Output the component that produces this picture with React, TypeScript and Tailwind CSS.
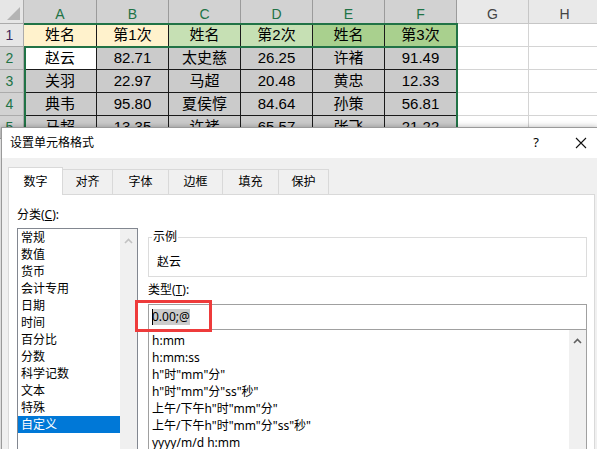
import React from "react";

const rows: string[][] = [
  ["姓名", "第1次", "姓名", "第2次", "姓名", "第3次"],
  ["赵云", "82.71", "太史慈", "26.25", "许褚", "91.49"],
  ["关羽", "22.97", "马超", "20.48", "黄忠", "12.33"],
  ["典韦", "95.80", "夏侯惇", "84.64", "孙策", "56.81"],
  ["马超", "13.35", "许褚", "65.57", "张飞", "21.22"],
];

const cols = ["A", "B", "C", "D", "E", "F", "G", "H"];

const headBg = ["bg-[#fff2cc]", "bg-[#fff2cc]", "bg-[#c6e0b4]", "bg-[#c6e0b4]", "bg-[#a9d08e]", "bg-[#a9d08e]"];

const categories = ["常规", "数值", "货币", "会计专用", "日期", "时间", "百分比", "分数", "科学记数", "文本", "特殊", "自定义"];

const formats = [
  "h:mm",
  "h:mm:ss",
  'h"时"mm"分"',
  'h"时"mm"分"ss"秒"',
  '上午/下午h"时"mm"分"',
  '上午/下午h"时"mm"分"ss"秒"',
  "yyyy/m/d h:mm",
  "mm:ss",
];

const tabs = [
  { label: "数字", w: "w-[55px]" },
  { label: "对齐", w: "w-[50px]" },
  { label: "字体", w: "w-[56px]" },
  { label: "边框", w: "w-[54px]" },
  { label: "填充", w: "w-[56px]" },
  { label: "保护", w: "w-[50px]" },
];

const Chevron = ({ color }: { color: string }) => (
  <svg width="9" height="6" viewBox="0 0 9 6" className="mx-auto">
    <polyline points="1,5 4.5,1.5 8,5" fill="none" stroke={color} strokeWidth="1.6" />
  </svg>
);

const Sheet = () => {
  return (
    <div className="grid grid-cols-[24px_73px_72px_72px_72px_72px_72px_72px_72px] grid-rows-[24px_23px_23px_23px_23px_23px] font-['Liberation_Sans','Noto_Sans_CJK_SC',sans-serif] text-[15px] text-black">
      <div className="bg-[#e6e6e6] border-r border-b border-[#ababab] flex items-end justify-end p-[3px]">
        <div className="w-0 h-0 border-l-[13px] border-l-transparent border-b-[13px] border-b-[#b4b4b4]"></div>
      </div>
      {cols.map((c, i) => (
        <div
          key={c}
          className={`flex items-center justify-center pt-[6px] text-[14px] border-r border-b ${
            i < 6 ? "bg-[#d2d2d2] text-[#217346] border-[#9b9b9b]" : "bg-[#e9e9e9] text-[#444] border-[#c6c6c6]"
          }`}
        >
          {c}
        </div>
      ))}
      {rows.map((r, ri) => (
        <React.Fragment key={ri}>
          <div
            className={`flex items-center justify-center pr-[4px] text-[14px] border-r border-b border-[#ababab] ${
              ri === 0 ? "bg-[#e6e6e6] text-[#3d2a5c]" : "bg-[#d2d2d2] text-[#217346]"
            }`}
          >
            {ri + 1}
          </div>
          {r.map((v, ci) => (
            <div
              key={ci}
              className={`flex items-center justify-center border-r border-b border-[#1a1a1a] ${
                ri === 0 ? headBg[ci] : ri === 1 && ci === 0 ? "bg-white" : "bg-[#cbcbcb]"
              }`}
            >
              {v}
            </div>
          ))}
          <div className="bg-white border-r border-b border-[#d4d4d4]"></div>
          <div className="bg-white border-r border-b border-[#d4d4d4]"></div>
        </React.Fragment>
      ))}
    </div>
  );
};

const Dialog = () => {
  return (
    <div className="absolute left-[1px] top-[127px] w-[597px] h-[330px] border border-[#9a9a9a] bg-[#f0f0f0] shadow-[0_0_6px_rgba(0,0,0,0.3)] flex flex-col text-[12px] text-black font-['Noto_Sans','Noto_Sans_CJK_SC',sans-serif]">
      <div className="h-[30px] bg-white flex items-center pl-[8px] shrink-0">
        <span>设置单元格格式</span>
        <div className="ml-auto flex items-center pr-[10px]">
          <span className="text-[13px]">?</span>
          <svg width="12" height="12" viewBox="0 0 12 12" className="ml-[36px]">
            <path d="M1 1 L11 11 M11 1 L1 11" stroke="#111" strokeWidth="1.1" />
          </svg>
        </div>
      </div>

      <div className="flex flex-col flex-1 pt-[9px] pl-[6px]">
        <div className="flex items-end h-[28px] relative z-10 -mb-px">
          {tabs.map((t, i) =>
            i === 0 ? (
              <div
                key={t.label}
                className={`${t.w} h-[28px] bg-white border border-b-0 border-[#d9d9d9] flex items-center justify-center`}
              >
                {t.label}
              </div>
            ) : (
              <div
                key={t.label}
                className={`${t.w} h-[25px] mb-px border-t border-r border-[#d9d9d9] bg-[#f0f0f0] flex items-center justify-center`}
              >
                {t.label}
              </div>
            )
          )}
        </div>

        <div className="w-[587px] flex-1 bg-white border border-[#d9d9d9] flex pl-[8px]">
          <div className="w-[121px] flex flex-col">
            <div className="mt-[12px] leading-[16px]">
              分类(<span className="underline">C</span>):
            </div>
            <div className="mt-[5px] h-[240px] border border-[#828790] flex">
              <div className="flex-1 flex flex-col">
                {categories.map((c, i) => (
                  <div
                    key={c}
                    className={`h-[17px] leading-[17px] pl-[3px] ${i === 11 ? "bg-[#0078d7] text-white" : ""}`}
                  >
                    {c}
                  </div>
                ))}
              </div>
              <div className="w-[17px] bg-[#f0f0f0] pt-[9px]">
                <Chevron color="#c2c2c2" />
              </div>
            </div>
          </div>

          <div className="w-[439px] ml-[10px] flex flex-col">
            <fieldset className="mt-[34px] border border-[#dcdcdc] pl-[3px] pb-[6px]">
              <legend className="px-[1px] leading-[16px]">示例</legend>
              <div className="mt-[9px] ml-[5px] leading-[16px]">赵云</div>
            </fieldset>
            <div className="mt-[5px] leading-[16px]">
              类型(<span className="underline">T</span>):
            </div>
            <div className="mt-[6px] h-[26px] border border-[#a0a0a0] flex items-center pl-[3px]">
              <span className="relative bg-[#cccccc] leading-[16px]">
                <span className="absolute left-0 top-0 h-[16px] w-px bg-black"></span>
                0.00;@
              </span>
            </div>
            <div className="h-[140px] border border-t-0 border-[#a0a0a0] flex">
              <div className="flex-1 pt-[2px] flex flex-col">
                {formats.map((f) => (
                  <div key={f} className="h-[17px] leading-[17px] pl-[3px] whitespace-nowrap">
                    {f}
                  </div>
                ))}
              </div>
              <div className="w-[17px] bg-[#f0f0f0] pt-[8px]">
                <Chevron color="#606060" />
              </div>
            </div>
          </div>
        </div>
      </div>

      <div className="absolute left-[133px] top-[172px] w-[77px] h-[32px] border-[3px] border-[#ee3b3b]"></div>
    </div>
  );
};

export default function App() {
  return (
    <div className="relative w-[597px] h-[449px] overflow-hidden bg-white">
      <Sheet />
      {/* selection outline over the sheet */}
      <div className="absolute left-[24px] top-[23px] w-[434px] h-[2px] bg-[#217346]"></div>
      <div className="absolute left-[24px] top-[46px] w-[434px] h-[2px] bg-[#217346]"></div>
      <div className="absolute left-[24px] top-[46px] w-[2px] h-[90px] bg-[#217346]"></div>
      <div className="absolute left-[456px] top-[23px] w-[2px] h-[110px] bg-[#217346]"></div>
      <Dialog />
    </div>
  );
}
